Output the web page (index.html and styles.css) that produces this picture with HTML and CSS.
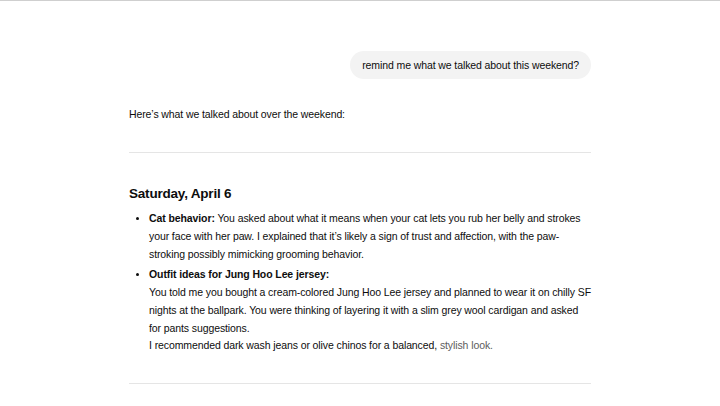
FILE: index.html
```html
<!DOCTYPE html>
<html lang="en">
<head>
  <meta charset="UTF-8" />
  <title>Chat</title>
  <link rel="stylesheet" href="styles.css">
</head>
<body>
<div class="thread">
  <div class="user-row">
    <div class="user-bubble">remind me what we talked about this weekend?</div>
  </div>

  <div class="answer">
    <p class="intro">Here’s what we talked about over the weekend:</p>
    <hr>
    <h3>Saturday, April 6</h3>
    <ul>
      <li><strong>Cat behavior:</strong> You asked about what it means when your cat lets you rub her belly and strokes your face with her paw. I explained that it’s likely a sign of trust and affection, with the paw-stroking possibly mimicking grooming behavior.</li>
      <li><strong>Outfit ideas for Jung Hoo Lee jersey:</strong><br>
        You told me you bought a cream-colored Jung Hoo Lee jersey and planned to wear it on chilly SF nights at the ballpark. You were thinking of layering it with a slim grey wool cardigan and asked for pants suggestions.<br>
        I recommended dark wash jeans or olive chinos for a balanced, <span class="fade">stylish look.</span></li>
    </ul>
    <hr>
  </div>
</div>
</body>
</html>
```

FILE: styles.css
```css
body {
  margin: 0;
  border-top: 1px solid #cfcfcf;
  background-color: #ffffff;
  font-family: 'Liberation Sans', Arial, sans-serif;
  color: #0d0d0d;
  font-size: 10.5px;
  letter-spacing: -0.1px;
}

.thread {
  width: 462px;
  margin: 0 auto;
  padding-top: 50px;
}

.user-row {
  display: flex;
  justify-content: flex-end;
}

.user-bubble {
  background-color: #f3f3f3;
  border-radius: 14px;
  padding: 0 12px;
  height: 28px;
  line-height: 28px;
}

.answer {
  padding-top: 26px;
  line-height: 18px;
}

.intro {
  margin: 0;
}

hr {
  border: none;
  border-top: 1px solid #e5e5e5;
  margin: 29px 0 0;
}

h3 {
  font-size: 13.5px;
  letter-spacing: -0.2px;
  line-height: 20px;
  margin: 31px 0 6px;
}

ul {
  margin: 0;
  padding-left: 20px;
  line-height: 17.75px;
}

li {
  margin-bottom: 3px;
}

li::marker {
  font-size: 10px;
}

strong {
  font-weight: bold;
}

.fade {
  color: #5d5d5d;
}

ul + hr {
  margin-top: 28px;
}
```
